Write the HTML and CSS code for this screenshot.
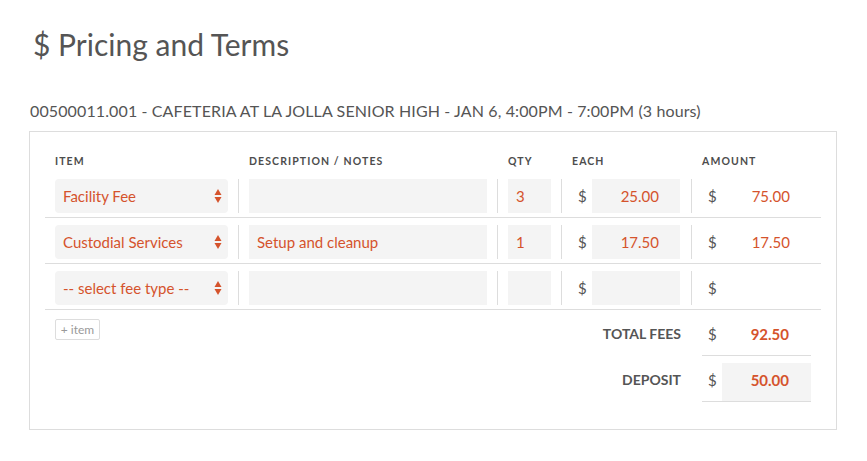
FILE: index.html
```html
<!DOCTYPE html>
<html>
<head>
<meta charset="utf-8">
<link rel="stylesheet" href="styles.css">
</head>
<body>
<div class="page">
  <h1 class="title">$ Pricing and Terms</h1>
  <p class="event">00500011.001 - CAFETERIA AT LA JOLLA SENIOR HIGH - JAN 6, 4:00PM - 7:00PM (3 hours)</p>
  <div class="box">
    <div class="grid head">
      <div class="hcell c1">ITEM</div>
      <div class="hcell">DESCRIPTION / NOTES</div>
      <div class="hcell">QTY</div>
      <div class="hcell">EACH</div>
      <div class="hcell">AMOUNT</div>
    </div>

    <div class="grid row">
      <div class="cell c1"><div class="select"><span>Facility Fee</span><svg class="arr" width="8" height="16" viewBox="0 0 8 16"><polygon points="0.5,7 4,1 7.5,7"/><polygon points="0.5,9 7.5,9 4,15"/></svg></div></div>
      <div class="cell"><div class="input desc"></div></div>
      <div class="cell"><div class="input qty">3</div></div>
      <div class="cell money"><span class="cur">$</span><div class="input each">25.00</div></div>
      <div class="cell money"><span class="cur">$</span><span class="amt">75.00</span></div>
    </div>

    <div class="grid row">
      <div class="cell c1"><div class="select"><span>Custodial Services</span><svg class="arr" width="8" height="16" viewBox="0 0 8 16"><polygon points="0.5,7 4,1 7.5,7"/><polygon points="0.5,9 7.5,9 4,15"/></svg></div></div>
      <div class="cell"><div class="input desc">Setup and cleanup</div></div>
      <div class="cell"><div class="input qty">1</div></div>
      <div class="cell money"><span class="cur">$</span><div class="input each">17.50</div></div>
      <div class="cell money"><span class="cur">$</span><span class="amt">17.50</span></div>
    </div>

    <div class="grid row">
      <div class="cell c1"><div class="select"><span>-- select fee type --</span><svg class="arr" width="8" height="16" viewBox="0 0 8 16"><polygon points="0.5,7 4,1 7.5,7"/><polygon points="0.5,9 7.5,9 4,15"/></svg></div></div>
      <div class="cell"><div class="input desc"></div></div>
      <div class="cell"><div class="input qty"></div></div>
      <div class="cell money"><span class="cur">$</span><div class="input each"></div></div>
      <div class="cell money"><span class="cur">$</span><span class="amt"></span></div>
    </div>

    <div class="grid foot">
      <div class="addwrap"><button class="add">+ item</button></div>
      <div class="tlabel r1">TOTAL FEES</div>
      <div class="tval r1"><span class="cur">$</span><span class="tnum">92.50</span></div>
      <div class="tlabel r2">DEPOSIT</div>
      <div class="tval r2"><span class="cur">$</span><span class="tnum dep">50.00</span></div>
    </div>
  </div>
</div>
</body>
</html>
```

FILE: styles.css
```css
* { box-sizing: border-box; }
body {
  margin: 0;
  background: #fff;
  font-family: Lato, "Open Sans", sans-serif;
  color: #555;
}
.page {
  padding: 26px 30px 0 29px;
  width: 867px;
}
.title {
  margin: 0 0 0 4px;
  font-size: 30px;
  line-height: 36px;
  font-weight: 400;
  color: #555;
}
.event {
  margin: 39px 0 10px 1px;
  font-size: 16px;
  line-height: 20px;
  letter-spacing: 0.12px;
  color: #555;
}
.box {
  width: 808px;
  height: 299px;
  border: 1px solid #ddd;
  padding: 22px 15px 0 15px;
}
.grid {
  display: grid;
  grid-template-columns: 193px 259px 64px 130px 130px;
}
.head {
  height: 18px;
  padding-bottom: 4px;
}
.hcell {
  font-size: 10.5px;
  line-height: 14px;
  font-weight: 700;
  letter-spacing: 1.1px;
  color: #4d4d4d;
  padding-left: 11px;
  white-space: nowrap;
}
.hcell.c1 { padding-left: 10px; }
.row {
  padding: 7px 0 4px;
  border-bottom: 1px solid #ddd;
  height: 46px;
}
.cell {
  border-left: 1px solid #ddd;
  padding: 0 10px;
  height: 34px;
  display: flex;
  align-items: center;
  font-size: 15px;
  color: #d5532c;
}
.cell.c1 { border-left: none; }
.select {
  width: 173px;
  height: 34px;
  background: #f4f4f4;
  border-radius: 4px;
  display: flex;
  align-items: center;
  justify-content: space-between;
  padding: 0 6px 0 8px;
}
.arr { fill: #d5532c; }
.input {
  height: 34px;
  background: #f4f4f4;
  display: flex;
  align-items: center;
  padding: 0 8px;
}
.desc { width: 238px; }
.qty { width: 43px; }
.money { padding-left: 16px; }
.cur {
  color: #555;
  width: 14px;
  flex: none;
}
.each {
  width: 88px;
  justify-content: flex-end;
  padding-right: 21px;
}
.amt {
  flex: 1;
  text-align: right;
  padding-right: 21px;
}
.foot {
  grid-template-rows: 46px 46px;
}
.addwrap {
  grid-column: 1;
  grid-row: 1;
  padding: 8px 0 0 10px;
}
.add {
  font-family: Lato, sans-serif;
  font-size: 12px;
  color: #999;
  background: #fff;
  border: 1px solid #ddd;
  border-radius: 2px;
  height: 21px;
  width: 45px;
  padding: 0;
  line-height: 19px;
}
.tlabel {
  grid-column: 2 / 5;
  text-align: right;
  font-size: 14px;
  font-weight: 700;
  color: #555;
  padding: 7px 10px 0 0;
  line-height: 34px;
}
.r1 { grid-row: 1; }
.r2 { grid-row: 2; }
.tval {
  grid-column: 5;
  margin: 0 10px 0 11px;
  padding-top: 7px;
  border-bottom: 1px solid #ddd;
  display: flex;
  align-items: stretch;
}
.tval .cur {
  padding-left: 6px;
  width: 20px;
  line-height: 35px;
  font-size: 15px;
}
.tnum {
  flex: 1;
  text-align: right;
  padding-right: 22px;
  padding-bottom: 3px;
  line-height: 35px;
  font-size: 15px;
  font-weight: 700;
  color: #d5532c;
}
.tnum.dep { background: #f4f4f4; }
```
